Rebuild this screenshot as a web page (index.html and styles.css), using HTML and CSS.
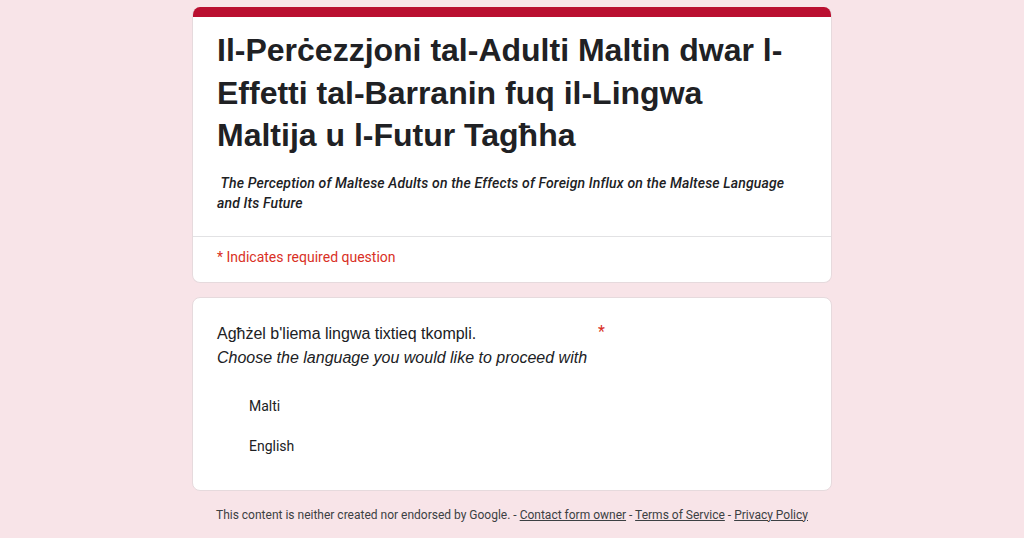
FILE: index.html
```html
<!DOCTYPE html>
<html lang="mt">
<head>
<meta charset="utf-8">
<title>Il-Perċezzjoni tal-Adulti Maltin</title>
<link rel="stylesheet" href="styles.css">
</head>
<body>
<div class="page">
  <div class="card header-card">
    <div class="bar"></div>
    <div class="head-body">
      <h1 class="title">Il-Perċezzjoni tal-Adulti Maltin dwar l-Effetti tal-Barranin fuq il-Lingwa Maltija u l-Futur Tagħha</h1>
      <p class="subtitle">&nbsp;The Perception of Maltese Adults on the Effects of Foreign Influx on the Maltese Language and Its Future</p>
    </div>
    <div class="required-note">* Indicates required question</div>
  </div>

  <div class="card question-card">
    <div class="question">
      <div class="q-text">
        <div>Agħżel b'liema lingwa tixtieq tkompli.</div>
        <div class="q-en">Choose the language you would like to proceed with</div>
      </div>
      <span class="req">*</span>
    </div>
    <div class="options">
      <div class="option">Malti</div>
      <div class="option">English</div>
    </div>
  </div>

  <div class="footer">This content is neither created nor endorsed by Google. - <a href="#">Contact form owner</a> - <a href="#">Terms of Service</a> - <a href="#">Privacy Policy</a></div>
</div>
</body>
</html>
```

FILE: styles.css
```css
*, *::before, *::after {
  box-sizing: border-box;
}
html, body {
  margin: 0;
  padding: 0;
}
body {
  background: #f8e4e8;
  font-family: Roboto, "Liberation Sans", Arial, sans-serif;
  color: #202124;
}
.page {
  display: flex;
  flex-direction: column;
  align-items: center;
  padding-top: 7px;
}
.card {
  width: 640px;
  background: #fff;
  border: 1px solid #e6dadd;
  border-radius: 8px;
}
.header-card {
  border-top: none;
  overflow: hidden;
}
.bar {
  height: 10px;
  background: #ba0f30;
}
.head-body {
  padding: 12px 24px 23px 24px;
  border-bottom: 1px solid #e2e2e4;
}
.title {
  margin: 0;
  font-family: "Liberation Sans", Arial, sans-serif;
  font-weight: 700;
  font-size: 32px;
  line-height: 42.5px;
  color: #202124;
}
.subtitle {
  margin: 16px 0 0 0;
  font-family: Roboto, sans-serif;
  font-style: italic;
  font-weight: 500;
  font-size: 14px;
  line-height: 20px;
  letter-spacing: 0.15px;
  color: #202124;
}
.required-note {
  padding: 10px 24px 15px 24px;
  font-size: 14px;
  line-height: 20px;
  color: #d93025;
}
.question-card {
  margin-top: 14px;
  padding: 24px 24px 24px 24px;
}
.question {
  display: flex;
  align-items: flex-start;
}
.q-text {
  font-family: "Liberation Sans", Arial, sans-serif;
  font-size: 16px;
  line-height: 24px;
  color: #202124;
}
.q-en {
  font-style: italic;
}
.req {
  margin-left: 11px;
  color: #d93025;
  font-family: Roboto, sans-serif;
  font-size: 16px;
  line-height: 20px;
}
.options {
  margin-top: 16px;
  display: flex;
  flex-direction: column;
}
.option {
  height: 40px;
  display: flex;
  align-items: center;
  padding-left: 32px;
  font-size: 14px;
  color: #202124;
}
.footer {
  margin-top: 16px;
  font-size: 12px;
  line-height: 16px;
  color: #3c4043;
}
.footer a {
  color: #3c4043;
  text-decoration: underline;
}
```
